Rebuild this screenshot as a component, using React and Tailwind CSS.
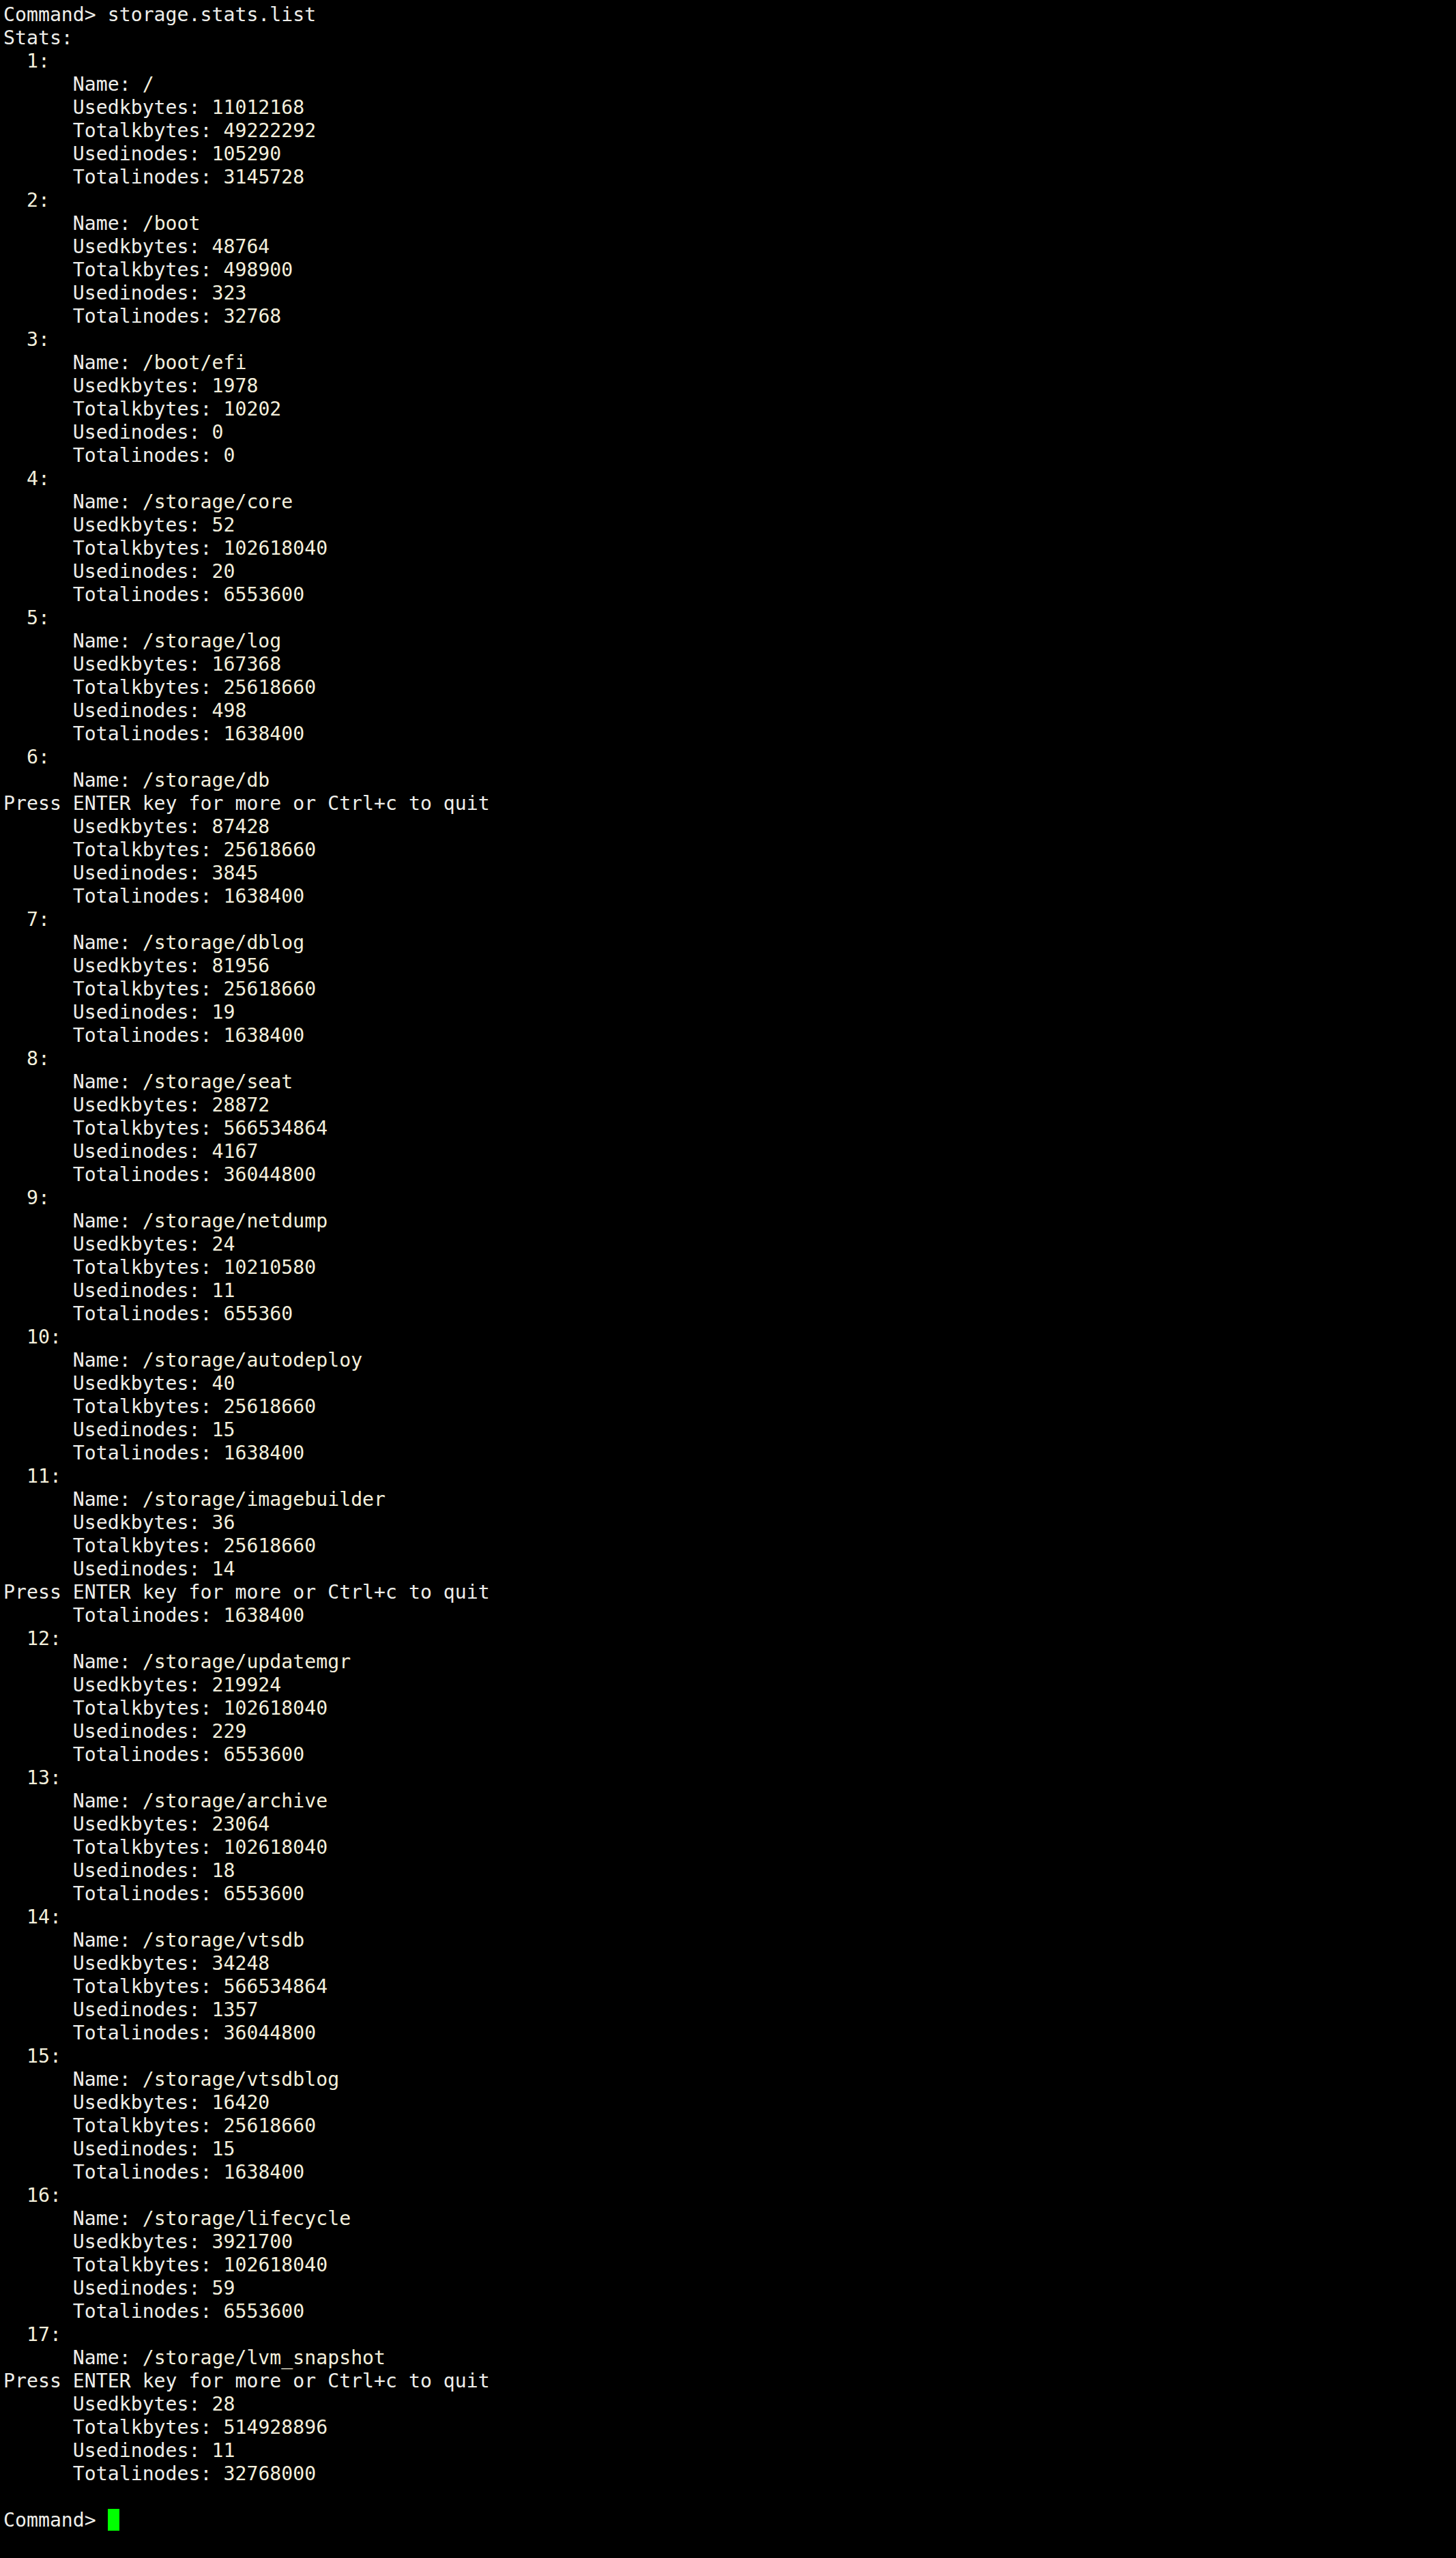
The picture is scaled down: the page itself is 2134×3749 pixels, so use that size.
import React from "react";

const entries = [
  ["/", "11012168", "49222292", "105290", "3145728"],
  ["/boot", "48764", "498900", "323", "32768"],
  ["/boot/efi", "1978", "10202", "0", "0"],
  ["/storage/core", "52", "102618040", "20", "6553600"],
  ["/storage/log", "167368", "25618660", "498", "1638400"],
  ["/storage/db", "87428", "25618660", "3845", "1638400"],
  ["/storage/dblog", "81956", "25618660", "19", "1638400"],
  ["/storage/seat", "28872", "566534864", "4167", "36044800"],
  ["/storage/netdump", "24", "10210580", "11", "655360"],
  ["/storage/autodeploy", "40", "25618660", "15", "1638400"],
  ["/storage/imagebuilder", "36", "25618660", "14", "1638400"],
  ["/storage/updatemgr", "219924", "102618040", "229", "6553600"],
  ["/storage/archive", "23064", "102618040", "18", "6553600"],
  ["/storage/vtsdb", "34248", "566534864", "1357", "36044800"],
  ["/storage/vtsdblog", "16420", "25618660", "15", "1638400"],
  ["/storage/lifecycle", "3921700", "102618040", "59", "6553600"],
  ["/storage/lvm_snapshot", "28", "514928896", "11", "32768000"],
];

const labels = ["Name", "Usedkbytes", "Totalkbytes", "Usedinodes", "Totalinodes"];

const pressAfter = { "5-0": true, "10-3": true, "16-0": true };

function buildLines() {
  const lines = [];
  lines.push({ t: "plain", text: "Command> storage.stats.list" });
  lines.push({ t: "plain", text: "Stats:" });
  entries.forEach((e, i) => {
    lines.push({ t: "idx", text: `  ${i + 1}:` });
    e.forEach((v, j) => {
      lines.push({ t: "kv", label: labels[j], value: v });
      if (pressAfter[`${i}-${j}`]) {
        lines.push({ t: "plain", text: "Press ENTER key for more or Ctrl+c to quit" });
      }
    });
  });
  lines.push({ t: "blank" });
  lines.push({ t: "prompt" });
  return lines;
}

export default function App() {
  const lines = buildLines();
  return (
    <div
      className="min-h-[3749px] w-[2134px] bg-black pl-[5px] pt-[5px] text-[28.2px] leading-[34px] text-[#eeeeea] whitespace-pre"
      style={{ fontFamily: '"DejaVu Sans Mono", "Liberation Mono", monospace' }}
    >
      {lines.map((l, k) => {
        if (l.t === "plain") return <div key={k} className="h-[34px]">{l.text}</div>;
        if (l.t === "idx") return <div key={k} className="h-[34px] text-[#f3efdc]">{l.text}</div>;
        if (l.t === "kv")
          return (
            <div key={k} className="h-[34px]">
              {"      "}
              {l.label}: <span className="text-[#f3efdc]">{l.value}</span>
            </div>
          );
        if (l.t === "blank") return <div key={k} className="h-[34px]">{" "}</div>;
        return (
          <div key={k} className="flex h-[34px] items-start">
            <span>{"Command> "}</span>
            <span className="inline-block h-[32px] w-[17px] bg-[#00ff00]" />
          </div>
        );
      })}
    </div>
  );
}
